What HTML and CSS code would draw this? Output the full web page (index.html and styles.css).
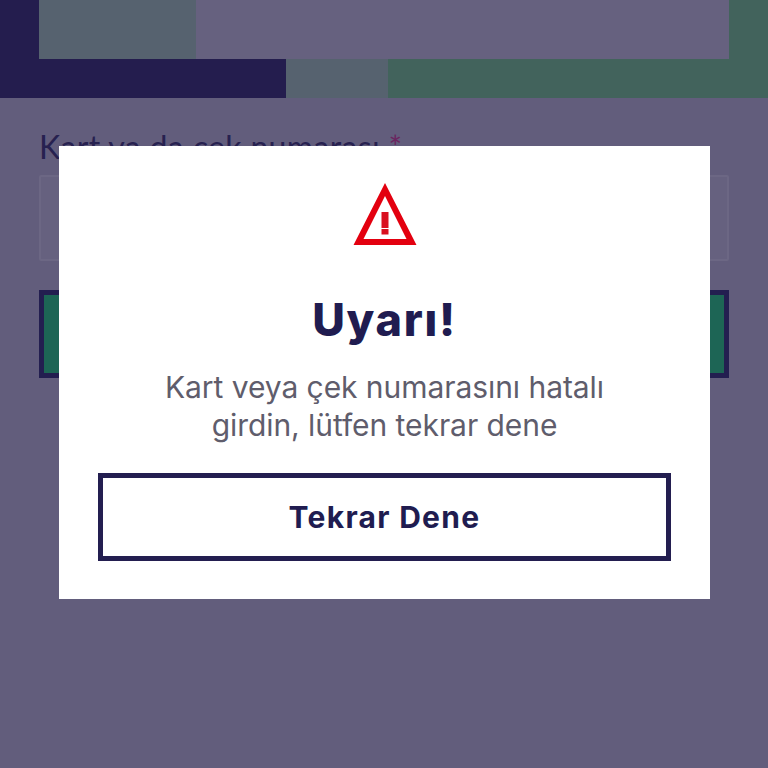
FILE: index.html
```
<!DOCTYPE html>
<html lang="tr">
<head>
<meta charset="utf-8">
<title>Uyarı</title>
<link rel="stylesheet" href="styles.css">
</head>
<body>
<div class="page">
  <header class="top">
    <div class="top-row-a">
      <div class="side-navy"></div>
      <div class="tile-grey"></div>
      <div class="tile-purple"></div>
      <div class="side-green"></div>
    </div>
    <div class="top-row-b">
      <div class="bar-navy"></div>
      <div class="bar-grey"></div>
      <div class="bar-green"></div>
    </div>
  </header>
  <form class="form">
    <label class="label">Kart ya da çek numarası <span class="req">*</span></label>
    <div class="input"></div>
    <div class="submit"></div>
  </form>
</div>
<div class="overlay">
  <div class="modal">
    <svg class="warn" width="64" height="64" viewBox="0 0 64 64" aria-hidden="true">
      <path fill-rule="evenodd" d="M32 2 L63.5 64 H0.5 Z M32 15 L10.5 58 H53.5 Z" fill="#e3000f"/>
      <rect x="28.5" y="31" width="7" height="16" fill="#d9101f"/>
      <rect x="28.5" y="48" width="7" height="5.5" fill="#d9101f"/>
    </svg>
    <h1 class="title">Uyarı!</h1>
    <p class="message">Kart veya çek numarasını hatalı<br>girdin, lütfen tekrar dene</p>
    <button class="retry" type="button">Tekrar Dene</button>
  </div>
</div>
</body>
</html>
```
FILE: styles.css
```
* { box-sizing: border-box; }
html, body { margin: 0; height: 100%; }
body {
  width: 768px;
  height: 768px;
  overflow: hidden;
  position: relative;
  background: #625d7c;
  font-family: Inter, "Liberation Sans", sans-serif;
}
.page { display: flex; flex-direction: column; height: 768px; }
.top { display: flex; flex-direction: column; }
.top-row-a { display: flex; height: 59px; }
.side-navy { width: 39px; background: #241d4e; }
.tile-grey { width: 157px; background: #56626f; }
.tile-purple { flex: 1; background: #66617f; }
.side-green { width: 39px; background: #42635c; }
.top-row-b { display: flex; height: 39px; }
.bar-navy { width: 286px; background: #241d4e; }
.bar-grey { width: 102px; background: #56626f; }
.bar-green { flex: 1; background: #42635c; }
.form { display: flex; flex-direction: column; padding: 32px 39px 0; }
.label {
  font-family: Lato, sans-serif;
  font-size: 32px;
  line-height: 34px;
  letter-spacing: 0.35px;
  color: #272150;
}
.req { color: #6b2560; }
.input {
  height: 86px;
  margin-top: 11px;
  background: #66617f;
  border: 2px solid #6c6784;
  border-radius: 2px;
}
.submit {
  height: 88px;
  margin-top: 29px;
  background: #1d6555;
  border: 5px solid #231e50;
}
.overlay {
  position: absolute;
  inset: 0;
  display: flex;
  justify-content: center;
  align-items: flex-start;
  padding: 146px 0 0 1px;
}
.modal {
  width: 651px;
  height: 453px;
  background: #fff;
  padding: 35px 39px 0;
  display: flex;
  flex-direction: column;
  align-items: center;
}
.warn { display: block; flex: none; }
.title {
  margin: 49px 0 0;
  font-size: 45px;
  line-height: 52px;
  font-weight: 800;
  letter-spacing: 1.7px;
  color: #201c50;
  text-align: center;
}
.message {
  margin: 22px 0 0;
  font-size: 30px;
  line-height: 38px;
  font-weight: 400;
  letter-spacing: -0.06px;
  color: #5f5d6c;
  text-align: center;
}
.retry {
  width: 573px;
  height: 88px;
  margin-top: 29px;
  flex: none;
  background: #fff;
  border: 5px solid #231e50;
  border-radius: 0;
  font-family: inherit;
  font-size: 30px;
  font-weight: 700;
  letter-spacing: 1.3px;
  color: #201c50;
}
```
